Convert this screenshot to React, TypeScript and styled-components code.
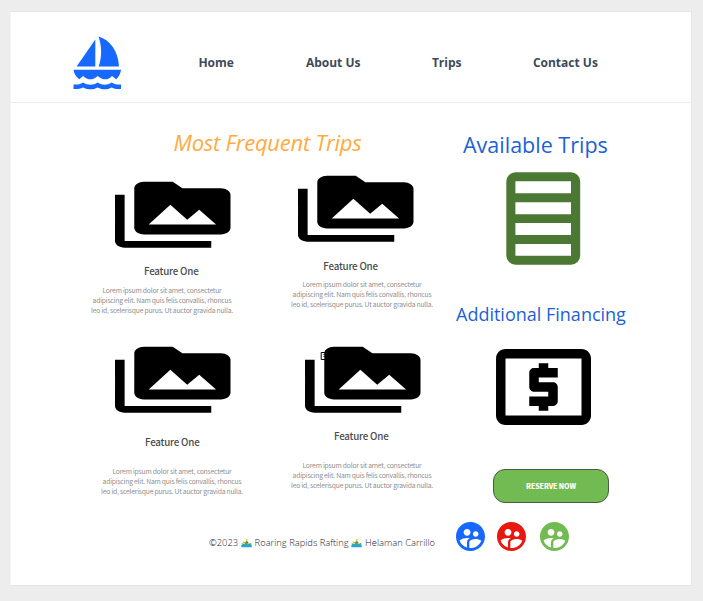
import React from "react";
import styled, { createGlobalStyle } from "styled-components";

const Global = createGlobalStyle`
  * { box-sizing: border-box; }
  body { margin: 0; background: #ededed; font-family: "Open Sans", sans-serif; }
  svg { display: block; flex: none; }
`;

const Page = styled.div`
  height: 601px;
  padding: 11px 11px 15px 10px;
`;
const Sheet = styled.div`
  height: 575px;
  background: #fff;
  border: 1px solid #e6e6e6;
  border-left-color: #f4f4f4;
`;
const Header = styled.header`
  display: flex;
  height: 91px;
  border-bottom: 1px solid #ececec;
  padding: 24px 0 0 62px;
`;
const Nav = styled.nav`
  display: flex;
  padding: 18px 0 0 75.4px;
`;
const NavLink = styled.a<{ $w: number }>`
  width: ${(p) => p.$w}px;
  font: 700 12px/18px "Open Sans", sans-serif;
  color: #3d4a5a;
  white-space: nowrap;
`;
const Main = styled.main`
  display: flex;
  height: 410px;
  padding-left: 80px;
`;
const Trips = styled.section`
  width: 365px;
`;
const TripsTitle = styled.h1`
  margin: 24px 0 0 82.5px;
  font: italic 400 22px/30px "Open Sans", sans-serif;
  letter-spacing: -0.25px;
  color: #ffab40;
  white-space: nowrap;
`;
const Cards = styled.div`
  display: grid;
  grid-template-columns: 200px 142px;
  grid-template-rows: 171px 160px;
  margin-top: 19px;
`;
const Card = styled.article<{ $x?: number; $y?: number }>`
  width: 142px;
  margin: ${(p) => p.$y ?? 0}px 0 0 ${(p) => p.$x ?? 0}px;
`;
const CardArt = styled.div<{ $x: number }>`
  display: grid;
  height: 66px;
  margin-left: ${(p) => p.$x}px;
  > svg { grid-area: 1 / 1; }
`;
const CardTitle = styled.h2<{ $x: number; $gap: number }>`
  margin: ${(p) => p.$gap}px 0 0 ${(p) => p.$x}px;
  font: 500 9.8px/14px "Noto Sans CJK SC", sans-serif;
  letter-spacing: -0.22px;
  color: #4c4c4c;
  white-space: nowrap;
`;
const CardText = styled.p<{ $gap: number }>`
  margin: ${(p) => p.$gap}px -10px 0;
  font: 400 6.8px/10px "Noto Sans CJK SC", sans-serif;
  letter-spacing: -0.23px;
  color: #8f8f8f;
  text-align: center;
  white-space: nowrap;
`;
const Side = styled.aside`
  width: 180px;
`;
const SideTitle = styled.h2<{ $size: number; $x: number; $top: number }>`
  margin: ${(p) => p.$top}px 0 0 ${(p) => p.$x}px;
  font: 400 ${(p) => p.$size}px/30px "Open Sans", sans-serif;
  color: #1c62d4;
  white-space: nowrap;
`;
const SideArt = styled.div<{ $x: number; $top: number }>`
  margin: ${(p) => p.$top}px 0 0 ${(p) => p.$x}px;
`;
const Reserve = styled.button`
  display: block;
  width: 116px;
  height: 34px;
  margin: 44px 0 0 37px;
  padding: 0;
  border: 1px solid #4c5a48;
  border-radius: 12px;
  background: #72bb53;
  color: #fff;
  font: 900 7px/32px "Noto Sans CJK SC", sans-serif;
  letter-spacing: -0.1px;
`;
const Footer = styled.footer`
  display: flex;
  padding-left: 198px;
`;
const Copy = styled.div`
  display: flex;
  width: 247px;
  padding-top: 22px;
  font: 300 9.36px/16px "Open Sans", sans-serif;
  color: #1c232d;
  white-space: nowrap;
  svg { margin: 3px 3px 0 2.5px; }
`;
const Socials = styled.div`
  display: flex;
  padding-top: 9px;
  gap: 12px;
  > :last-child { margin-left: 2px; }
`;

const Boat = () => (
  <svg width="50" height="54" viewBox="0 .6 50 54" fill="#1668ff">
    <path d="M22.3 4.2V31H3.6Z" />
    <path d="M25.5 1C37.5 4.4 45.5 16.5 46 31H25.7C29 22 29 10.5 25.5 1Z" />
    <path d="M.5 34.3H48C47.5 38 46 41.3 43.2 43.8L39 40.5C35 45 30 45 24.7 40.5C20 45 15 45 10 40.5L6.3 43.8C3 41.2 1 38 .5 34.3Z" />
    <path d="M.5 49C4 49.2 7 49 10 47C15 50 20 50 24.7 47C29.5 50 34 50 38.7 47C42 49 44.5 49.2 48 49V53.5C44 53.7 41.5 53.5 38.7 52C34 54.6 29.5 54.6 24.7 52C20 54.6 15 54.6 10 52C7 53.5 4 53.7 .5 53.5Z" />
  </svg>
);
const Media = () => (
  <svg width="115.5" height="66" viewBox="0 2.1 24 20" preserveAspectRatio="none" overflow="visible">
    <path d="M2 6H0v5h.01L0 20c0 1.1.9 2 2 2h18v-2H2V6zm20-2h-8l-2-2H6c-1.1 0-1.99.9-1.99 2L4 16c0 1.1.9 2 2 2h16c1.1 0 2-.9 2-2V6c0-1.1-.9-2-2-2zM7 15l4.5-6 3.5 4.51 2.5-3.01L21 15H7z" />
  </svg>
);
const Marker = () => (
  <svg width="24" height="20" fill="none" stroke="#000">
    <path d="M16.2 5.5h6v7h-6zM19 7v1M19 9v1" />
  </svg>
);
const ListIcon = () => (
  <svg width="75" height="93" viewBox="0 0 75 93" fill="#4b7933" fillRule="evenodd">
    <path d="M9.5.2H65A9.2 9.2 0 0 1 74.2 9.4V83.5A9.2 9.2 0 0 1 65 92.7H9.5A9.2 9.2 0 0 1 .3 83.5V9.4A9.2 9.2 0 0 1 9.5.2ZM9.4 9.3V21.3H65V9.3ZM9.4 30.2V42.2H65V30.2ZM9.4 51.1V63.1H65V51.1ZM9.4 72V83.7H65V72Z" />
  </svg>
);
const Atm = () => (
  <svg width="95" height="76" viewBox="2 4 20 16" preserveAspectRatio="none">
    <path d="M11 17h2v-1h1c.55 0 1-.45 1-1v-3c0-.55-.45-1-1-1h-3v-1h4V8h-2V7h-2v1h-1c-.55 0-1 .45-1 1v3c0 .55.45 1 1 1h3v1H9v2h2v1zm9-13H4c-1.11 0-1.99.89-1.99 2L2 18c0 1.11.89 2 2 2h16c1.11 0 2-.89 2-2V6c0-1.11-.89-2-2-2zm0 14H4V6h16v12z" />
  </svg>
);
const People = ({ color }: { color: string }) => (
  <svg width="29" height="29" viewBox="2 2 20 20" fill={color}>
    <path d="M11.99 2c-5.52 0-10 4.48-10 10s4.48 10 10 10 10-4.48 10-10-4.48-10-10-10zm3.61 6.34c1.07 0 1.93.86 1.93 1.93 0 1.07-.86 1.93-1.93 1.93-1.07 0-1.93-.86-1.93-1.93-.01-1.07.86-1.93 1.93-1.93zm-6-1.58c1.3 0 2.36 1.06 2.36 2.36 0 1.3-1.06 2.36-2.36 2.36s-2.36-1.06-2.36-2.36c0-1.31 1.05-2.36 2.36-2.36zm0 9.13v3.75c-2.4-.75-4.3-2.6-5.14-4.96 1.05-1.12 3.67-1.69 5.14-1.69.53 0 1.2.08 1.9.22-1.64.87-1.9 2.02-1.9 2.68zM11.99 20c-.27 0-.53-.01-.79-.04v-4.07c0-1.42 2.94-2.13 4.4-2.13 1.07 0 2.92.39 3.84 1.15-1.17 2.97-4.06 5.09-7.45 5.09z" />
  </svg>
);
const Rower = () => (
  <svg width="11" height="10" viewBox="0 0 11 10">
    <circle cx="5.8" cy="1.8" r=".9" fill="#e8b62c" />
    <path d="M3.6 5.7L5 3.1L7 3.6L7.6 5.8Z" fill="#4d9c3c" />
    <path d="M1.7 3.8L7.2 6.4" stroke="#9a8b3c" strokeWidth=".8" />
    <path d="M.4 5.2L3 5.8H8L10.6 4.8L9.5 7.8H1.8Z" fill="#67a93a" />
    <path d="M.3 6.9L3 6.6L6 7.1L10.7 6.6V9.2H.3Z" fill="#18a5ee" />
  </svg>
);

type TripProps = {
  x?: number; y?: number; artX: number; titleX: number;
  titleGap: number; textGap: number; marked?: boolean;
};
const Trip = ({ x, y, artX, titleX, titleGap, textGap, marked }: TripProps) => (
  <Card $x={x} $y={y}>
    <CardArt $x={artX}>
      <Media />
      {marked && <Marker />}
    </CardArt>
    <CardTitle $x={titleX} $gap={titleGap}>Feature One</CardTitle>
    <CardText $gap={textGap}>
      Lorem ipsum dolor sit amet, consectetur<br />
      adipiscing elit. Nam quis felis convallis, rhoncus<br />
      leo id, scelerisque purus. Ut auctor gravida nulla.
    </CardText>
  </Card>
);

export default function App() {
  return (
    <Page>
      <Global />
      <Sheet>
        <Header>
          <Boat />
          <Nav>
            <NavLink $w={107.5}>Home</NavLink>
            <NavLink $w={126}>About Us</NavLink>
            <NavLink $w={101}>Trips</NavLink>
            <NavLink $w={80}>Contact Us</NavLink>
          </Nav>
        </Header>
        <Main>
          <Trips>
            <TripsTitle>Most Frequent Trips</TripsTitle>
            <Cards>
              <Trip y={6} artX={24} titleX={53} titleGap={16} textGap={7} />
              <Trip artX={7.3} titleX={32.3} titleGap={17} textGap={6} />
              <Trip x={10} artX={13.7} titleX={44} titleGap={22} textGap={17} />
              <Trip artX={14.2} titleX={43} titleGap={16} textGap={17} marked />
            </Cards>
          </Trips>
          <Side>
            <SideTitle $size={21.5} $x={7} $top={27}>Available Trips</SideTitle>
            <SideArt $x={50} $top={12}><ListIcon /></SideArt>
            <SideTitle $size={18} $x={0} $top={34}>Additional Financing</SideTitle>
            <SideArt $x={40} $top={20}><Atm /></SideArt>
            <Reserve>RESERVE NOW</Reserve>
          </Side>
        </Main>
        <Footer>
          <Copy>©2023<Rower />Roaring Rapids Rafting<Rower />Helaman Carrillo</Copy>
          <Socials>
            <People color="#1668ff" />
            <People color="#e81710" />
            <People color="#72bb53" />
          </Socials>
        </Footer>
      </Sheet>
    </Page>
  );
}
